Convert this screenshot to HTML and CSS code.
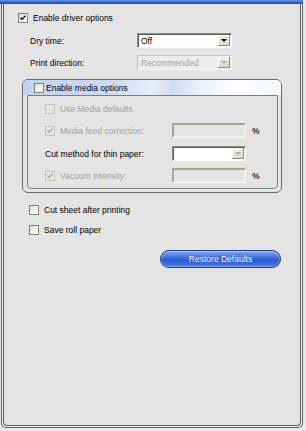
FILE: index.html
```html
<!DOCTYPE html>
<html lang="en">
<head>
  <meta charset="UTF-8" />
  <meta name="viewport" content="width=device-width, initial-scale=1" />
  <title>Driver Options</title>
  <link rel="stylesheet" href="styles.css">
</head>
<body>
  <div class="titlebar"></div>
  <div class="frame">
    <div class="panel">
      <div class="row row-top">
        <span class="cb"><svg viewBox="0 0 10 10"><path d="M1.8 4.6l2 2.1 4.2-4.6" /></svg></span>
        <span>Enable driver options</span>
      </div>

      <div class="field-row">
        <span class="field-label">Dry time:</span>
        <div class="select">
          <span class="select-value">Off</span>
          <span class="select-btn"><i class="tri"></i></span>
        </div>
      </div>

      <div class="field-row">
        <span class="field-label">Print direction:</span>
        <div class="select disabled">
          <span class="select-value">Recommended</span>
          <span class="select-btn"><i class="tri"></i></span>
        </div>
      </div>

      <div class="group">
        <div class="group-head">
          <span class="cb"></span>
          <span>Enable media options</span>
        </div>
        <div class="group-body">
          <div class="row inner-row">
            <span class="cb off"></span>
            <span class="muted">Use Media defaults</span>
          </div>
          <div class="row inner-row">
            <span class="inner-label">
              <span class="cb off"><svg viewBox="0 0 10 10"><path d="M1.8 4.6l2 2.1 4.2-4.6" /></svg></span>
              <span class="muted">Media feed correction:</span>
            </span>
            <span class="textbox"></span>
            <span class="unit">%</span>
          </div>
          <div class="row inner-row">
            <span class="inner-label">Cut method for thin paper:</span>
            <div class="select small">
              <span class="select-value"></span>
              <span class="select-btn off"><i class="tri"></i></span>
            </div>
          </div>
          <div class="row inner-row">
            <span class="inner-label">
              <span class="cb off"><svg viewBox="0 0 10 10"><path d="M1.8 4.6l2 2.1 4.2-4.6" /></svg></span>
              <span class="muted">Vacuum intensity:</span>
            </span>
            <span class="textbox"></span>
            <span class="unit">%</span>
          </div>
        </div>
      </div>

      <div class="row row-check first">
        <span class="cb"></span>
        <span>Cut sheet after printing</span>
      </div>
      <div class="row row-check">
        <span class="cb"></span>
        <span>Save roll paper</span>
      </div>

      <button class="restore-btn">Restore Defaults</button>
    </div>
  </div>
</body>
</html>
```

FILE: styles.css
```css
* {
  box-sizing: border-box;
}
body {
  margin: 0;
  background: #e9e9e9;
  font-family: "Liberation Sans", Arial, sans-serif;
  font-size: 8.5px;
  color: #000;
  width: 306px;
  height: 431px;
  overflow: hidden;
}

.titlebar {
  width: 303px;
  height: 4px;
  background: linear-gradient(#6c98ea, #3164d6 50%, #1f4db8);
}

.frame {
  margin-left: 1px;
  width: 302px;
  height: 424px;
  border: 1px solid #5c5c5c;
  border-top: none;
  border-radius: 0 0 5px 5px;
  padding: 0 1px 1px 1px;
  background: #f6f6f6;
}

.panel {
  height: 100%;
  border: 1px solid #5c5c5c;
  border-top: none;
  border-radius: 0 0 4px 4px;
  background: #e4e4e4;
  display: flex;
  flex-direction: column;
  align-items: flex-start;
  padding-top: 6px;
}

.row {
  display: flex;
  align-items: center;
  gap: 5px;
  white-space: nowrap;
}
.row-top {
  height: 15px;
  margin-left: 14px;
}

/* checkboxes */
.cb {
  width: 10px;
  height: 10px;
  flex: none;
  border: 1px solid #7e7e7a;
  background: linear-gradient(135deg, #d9d9d2, #fbfbf8 70%);
  display: flex;
  align-items: center;
  justify-content: center;
}
.cb svg {
  width: 8px;
  height: 8px;
  fill: none;
  stroke: #000;
  stroke-width: 1.7;
}
.cb.off {
  border-color: #c6c4ba;
  background: #e7e6de;
}
.cb.off svg {
  stroke: #a9a8a0;
}

.muted {
  color: #a3a3a3;
}

/* labelled dropdowns */
.field-row {
  display: flex;
  align-items: center;
  height: 15px;
  padding-left: 26px;
}
.field-row + .field-row {
  margin-top: 7px;
}
.row-top + .field-row {
  margin-top: 8px;
}
.field-label {
  width: 107px;
}

.select {
  width: 95px;
  height: 15px;
  display: flex;
  border: 1px solid;
  border-color: #8e8e8e #fdfdfd #fdfdfd #8e8e8e;
  box-shadow: inset 1px 1px 0 #5a5a5a;
  background: #fff;
}
.select-value {
  flex: 1;
  display: flex;
  align-items: center;
  padding-left: 3px;
}
.select-btn {
  width: 12px;
  margin: 1px 1px 1px 0;
  background: linear-gradient(#f2f1e8, #d9d7c9);
  box-shadow: inset -1px -1px 0 #8f8d82, inset 1px 1px 0 #fff;
  display: flex;
  align-items: center;
  justify-content: center;
}
.tri {
  width: 0;
  height: 0;
  border-left: 3px solid transparent;
  border-right: 3px solid transparent;
  border-top: 3px solid #000;
}
.select.disabled {
  background: #ececec;
  border-color: #c4c4c4 #f8f8f8 #f8f8f8 #c4c4c4;
  box-shadow: none;
}
.select.disabled .select-value {
  color: #a3a3a3;
}
.select.disabled .tri,
.select-btn.off .tri {
  border-top-color: #b3b2aa;
}
.select.small {
  width: 74px;
}

/* media options group */
.group {
  margin: 9px 0 0 18px;
  width: 260px;
  height: 114px;
  border: 1px solid #6a6a6a;
  border-radius: 6px;
  display: flex;
  flex-direction: column;
}
.group-head {
  height: 15px;
  flex: none;
  display: flex;
  align-items: center;
  gap: 2px;
  padding-left: 11px;
  border-radius: 5px 5px 0 0;
  background: linear-gradient(100deg, #c3d3f0 0%, #cddbf3 35%, #e8eef9 50%, #cfdcf3 58%, #eef3fb 70%, #fdfdfe 82%, #f5f7fb 100%);
}
.group-body {
  flex: 1;
  margin: 0 3px 3px 4px;
  border: 1px solid #7c7c7c;
  border-radius: 0 0 4px 4px;
  box-shadow: 1px 1px 0 #f4f4f4;
  padding: 5px 0 5px 17px;
  display: flex;
  flex-direction: column;
  gap: 7px;
}
.inner-row {
  height: 15px;
}
.inner-row:nth-child(3) {
  margin-top: 1px;
}
.inner-row .inner-label {
  width: 127px;
  display: flex;
  align-items: center;
  gap: 5px;
}
.row.inner-row {
  gap: 0;
}
.row.inner-row:first-child {
  gap: 5px;
}
.textbox {
  width: 74px;
  height: 15px;
  border: 2px solid;
  border-color: #a8a497 #f3f3ee #f3f3ee #a8a497;
  background: #e5e5e5;
}
.unit {
  margin-left: 6px;
  font-weight: bold;
  color: #333;
}

/* bottom checkboxes */
.row-check {
  height: 14px;
  margin-left: 25px;
  margin-top: 6px;
}
.row-check.first {
  margin-top: 10px;
}

.restore-btn {
  margin: 13px 0 0 156px;
  width: 121px;
  height: 18px;
  padding: 0;
  border: 1px solid #1d3b8c;
  border-radius: 9px;
  background: linear-gradient(#86a9ef, #3f70e2 40%, #2d5cd6 60%, #4b7be6);
  box-shadow: inset 0 0 0 1px rgba(255, 255, 255, 0.3);
  color: #fff;
  font-family: "Liberation Sans", Arial, sans-serif;
  font-size: 8.5px;
  text-shadow: 0 0 1px #1d3b8c;
}
```
